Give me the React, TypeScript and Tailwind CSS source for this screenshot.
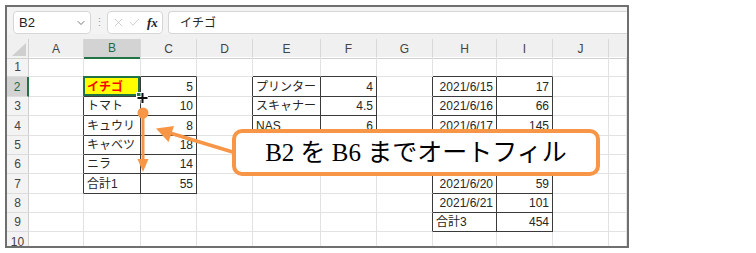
import { ChevronDown, X, Check } from "lucide-react";
import clsx from "clsx";

type CellVal = { v: string; right?: boolean };

const COLS = ["A", "B", "C", "D", "E", "F", "G", "H", "I", "J", ""];
const ROWS = [1, 2, 3, 4, 5, 6, 7, 8, 9, 10];

// rows 5-6 of the second and third table sit under the callout, so they stay empty here
const cells: Record<string, CellVal> = {
    B2: { v: "イチゴ" }, C2: { v: "5", right: true },
    B3: { v: "トマト" }, C3: { v: "10", right: true },
    B4: { v: "キュウリ" }, C4: { v: "8", right: true },
    B5: { v: "キャベツ" }, C5: { v: "18", right: true },
    B6: { v: "ニラ" }, C6: { v: "14", right: true },
    B7: { v: "合計1" }, C7: { v: "55", right: true },
    E2: { v: "プリンター" }, F2: { v: "4", right: true },
    E3: { v: "スキャナー" }, F3: { v: "4.5", right: true },
    E4: { v: "NAS" }, F4: { v: "6", right: true },
    H2: { v: "2021/6/15", right: true }, I2: { v: "17", right: true },
    H3: { v: "2021/6/16", right: true }, I3: { v: "66", right: true },
    H4: { v: "2021/6/17", right: true }, I4: { v: "145", right: true },
    H7: { v: "2021/6/20", right: true }, I7: { v: "59", right: true },
    H8: { v: "2021/6/21", right: true }, I8: { v: "101", right: true },
    H9: { v: "合計3" }, I9: { v: "454", right: true },
};

const tables = [
    { r1: 2, r2: 7, c1: 1, c2: 2 },
    { r1: 2, r2: 6, c1: 4, c2: 5 },
    { r1: 2, r2: 9, c1: 7, c2: 8 },
];

const inTable = (r: number, c: number) =>
    tables.some(t => r >= t.r1 && r <= t.r2 && c >= t.c1 && c <= t.c2);

const GridCell = ({ r, c }: { r: number; c: number }) => {
    const key = `${COLS[c]}${r}`;
    const cell = cells[key];
    const active = key === "B2";
    const darkR = inTable(r, c) || inTable(r, c + 1);
    const darkB = inTable(r, c) || inTable(r + 1, c);

    return (
        <div
        className={clsx(
            "relative flex items-center px-[3px] border-r border-b whitespace-nowrap",
            darkR ? "border-r-[#3a3a3a]" : "border-r-[#e2e2e2]",
            darkB ? "border-b-[#3a3a3a]" : "border-b-[#e2e2e2]",
            cell?.right ? "justify-end" : "justify-start",
            active && "bg-[#ffff00]"
        )}>
            {cell && (
                <span className={active ? "font-bold text-[#ff0000]" : "text-[#262626]"}>
                    {cell.v}
                </span>
            )}
            {active && (
                <div className="absolute -left-px -top-px right-0 bottom-0 border-2 border-[#217346]">
                    <div className="absolute -right-[4px] -bottom-[4px] w-[6px] h-[6px] bg-[#217346] border border-white" />
                </div>
            )}
        </div>
    );
};

const Toolbar = () => {
    return (
        <div className="h-[28px] bg-[#f3f3f3] flex items-start pt-[4px] pl-[6px]">
            <div className="w-[78px] h-[23px] bg-white border border-[#d6d6d6] rounded-[4px] flex items-center justify-between pl-[5px] pr-[3px]">
                <span className="text-[13px] text-[#222]">B2</span>
                <ChevronDown size={12} strokeWidth={1.6} className="text-[#555]" />
            </div>
            <div className="w-[16px] h-[23px] flex items-center justify-center text-[#9a9a9a] text-[11px]">
                ⋮
            </div>
            <div className="w-[56px] h-[23px] bg-white border border-[#d6d6d6] rounded-[4px] flex items-center pl-[4px] gap-[3px]">
                <X size={13} strokeWidth={1.2} className="text-[#b5b5b5]" />
                <Check size={13} strokeWidth={1.2} className="text-[#b5b5b5]" />
                <span className="ml-[3px] font-['Liberation_Serif',serif] italic font-bold text-[13px] text-[#222]">fx</span>
            </div>
            <div className="flex-1 ml-[5px] h-[23px] bg-white border border-r-0 border-[#d6d6d6] rounded-l-[4px] flex items-center pl-[11px]">
                <span className="text-[12px] text-[#262626]">イチゴ</span>
            </div>
        </div>
    );
};

const HeaderRow = () => {
    return (
        <div className="h-[23px] bg-[#f0f0f0] pt-[5px]">
            <div className="h-[18px] grid grid-cols-[22px_55px_57px_56px_56px_68px_56px_56px_64px_56px_56px_18px]">
                <div className="relative border-r border-b border-[#d0d0d0]">
                    <svg className="absolute right-[2px] bottom-[2px]" width="14" height="13" viewBox="0 0 14 13">
                        <polygon points="14,0 14,13 0,13" fill="#cfcfcf" />
                    </svg>
                </div>
                {COLS.map((col, i) => (
                    <div
                    key={i}
                    className={clsx(
                        "flex items-center justify-center text-[12px] border-b",
                        i === 10 ? "" : "border-r border-r-[#d8d8d8]",
                        col === "B"
                            ? "bg-[#d3d3d3] text-[#1e6b40] border-b-2 border-b-[#217346]"
                            : "text-[#444] border-b-[#d0d0d0]"
                    )}>
                        {col}
                    </div>
                ))}
            </div>
        </div>
    );
};

const Sheet = () => {
    return (
        <div className="grid grid-cols-[22px_55px_57px_56px_56px_68px_56px_56px_64px_56px_56px_18px] grid-rows-[20px_20px_19px_20px_19px_19px_20px_19px_19px_20px] text-[12px]">
            {ROWS.map(r => (
                <div key={r} className="contents">
                    <div
                    className={clsx(
                        "flex items-center justify-center border-b border-b-[#dcdcdc]",
                        r === 2
                            ? "bg-[#d3d3d3] text-[#1e6b40] border-r-2 border-r-[#217346]"
                            : "bg-[#f3f3f3] text-[#444] border-r border-r-[#cfcfcf]"
                    )}>
                        {r}
                    </div>
                    {COLS.map((_, c) => (
                        <GridCell key={c} r={r} c={c} />
                    ))}
                </div>
            ))}
        </div>
    );
};

const Overlay = () => {
    return (
        <svg className="absolute left-0 top-0 pointer-events-none" width="756" height="253" viewBox="0 0 756 253">
            {/* fill cursor */}
            <line x1="137" y1="98" x2="148" y2="98" stroke="#fff" strokeWidth="4" />
            <line x1="142.5" y1="92.5" x2="142.5" y2="103.5" stroke="#fff" strokeWidth="4" />
            <line x1="137.5" y1="98" x2="147.5" y2="98" stroke="#111" strokeWidth="2" />
            <line x1="142.5" y1="93" x2="142.5" y2="103" stroke="#111" strokeWidth="2" />
            {/* vertical drag arrow */}
            <circle cx="143" cy="113" r="5.5" fill="#f79646" />
            <line x1="143" y1="113" x2="143" y2="162" stroke="#f79646" strokeWidth="3" />
            <polygon points="137.5,159 148.5,159 143,172" fill="#f79646" />
            {/* pointer from callout */}
            <line x1="236" y1="153" x2="170" y2="133" stroke="#f79646" strokeWidth="3.5" />
            <polygon points="156,128.5 174,126 168.5,142" fill="#f79646" />
        </svg>
    );
};

const App = () => {
    return (
        <div className="relative w-[756px] h-[253px] bg-white overflow-hidden pt-[5px] pl-[5px] font-['Liberation_Sans','Noto_Sans_CJK_JP',sans-serif]">
            <div className="w-[624px] h-[243px] border-2 border-[#6f6f6f] bg-white overflow-hidden flex flex-col">
                <Toolbar />
                <HeaderRow />
                <Sheet />
            </div>
            <Overlay />
            <div className="absolute left-[232px] top-[129px] w-[368px] h-[47px] bg-white border-4 border-[#f79646] rounded-[10px] flex items-center justify-center">
                <span className="font-['Liberation_Serif','Noto_Sans_CJK_JP',serif] text-[25px] leading-none text-black">
                    B2 を B6 までオートフィル
                </span>
            </div>
        </div>
    );
};

export default App;
